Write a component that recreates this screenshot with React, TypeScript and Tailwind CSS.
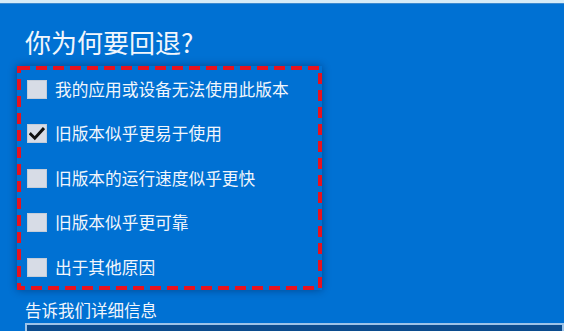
const reasons = [
  { label: "我的应用或设备无法使用此版本", checked: false },
  { label: "旧版本似乎更易于使用", checked: true },
  { label: "旧版本的运行速度似乎更快", checked: false },
  { label: "旧版本似乎更可靠", checked: false },
  { label: "出于其他原因", checked: false },
];

function CheckBox({ checked }: { checked: boolean }) {
  return (
    <div className="flex h-[19px] w-[20px] shrink-0 items-center justify-center border border-[#c4ccd8] bg-[#d7dce6]">
      {checked && (
        <svg width="16" height="14" viewBox="0 0 16 14" fill="none">
          <path d="M1.8 7.2 L5.8 11.2 L14 2.2" stroke="#111" strokeWidth="3" strokeLinecap="square" />
        </svg>
      )}
    </div>
  );
}

export default function App() {
  return (
    <div
      className="h-[331px] w-[564px] overflow-hidden bg-[#0071d3] text-[#f2f6fc]"
      style={{ fontFamily: '"Noto Sans CJK SC", "Noto Sans", sans-serif' }}
    >
      <div className="h-[3px] bg-[#d6ecf8]" />
      <div className="border-t border-[#3c8ad0]" />
      <h1 className="ml-[25px] mt-[25px] text-[26px] leading-none font-normal">你为何要回退?</h1>

      <div className="relative ml-[17px] mt-[11px] flex h-[224px] w-[305px] flex-col justify-between p-[4px] pl-[10px] shadow-[0_0_8px_rgba(0,20,60,0.45)]">
        {/* dashed red annotation frame */}
        <svg className="pointer-events-none absolute inset-0" width="305" height="224">
          <rect
            x="2"
            y="2"
            width="301"
            height="220"
            fill="none"
            stroke="#e8121e"
            strokeWidth="4"
            strokeDasharray="11 6"
          />
        </svg>
        {reasons.map((r) => (
          <div key={r.label} className="flex h-[38px] items-center gap-[8px]">
            <CheckBox checked={r.checked} />
            <span className="text-[16.7px] leading-none">{r.label}</span>
          </div>
        ))}
      </div>

      <div className="ml-[25px] mt-[12px] text-[16.5px] leading-none">告诉我们详细信息</div>
      <div className="ml-[25px] mt-[4px] h-[40px] border-2 border-[#9cc3e8] bg-[#0b4c8e]" />
    </div>
  );
}
